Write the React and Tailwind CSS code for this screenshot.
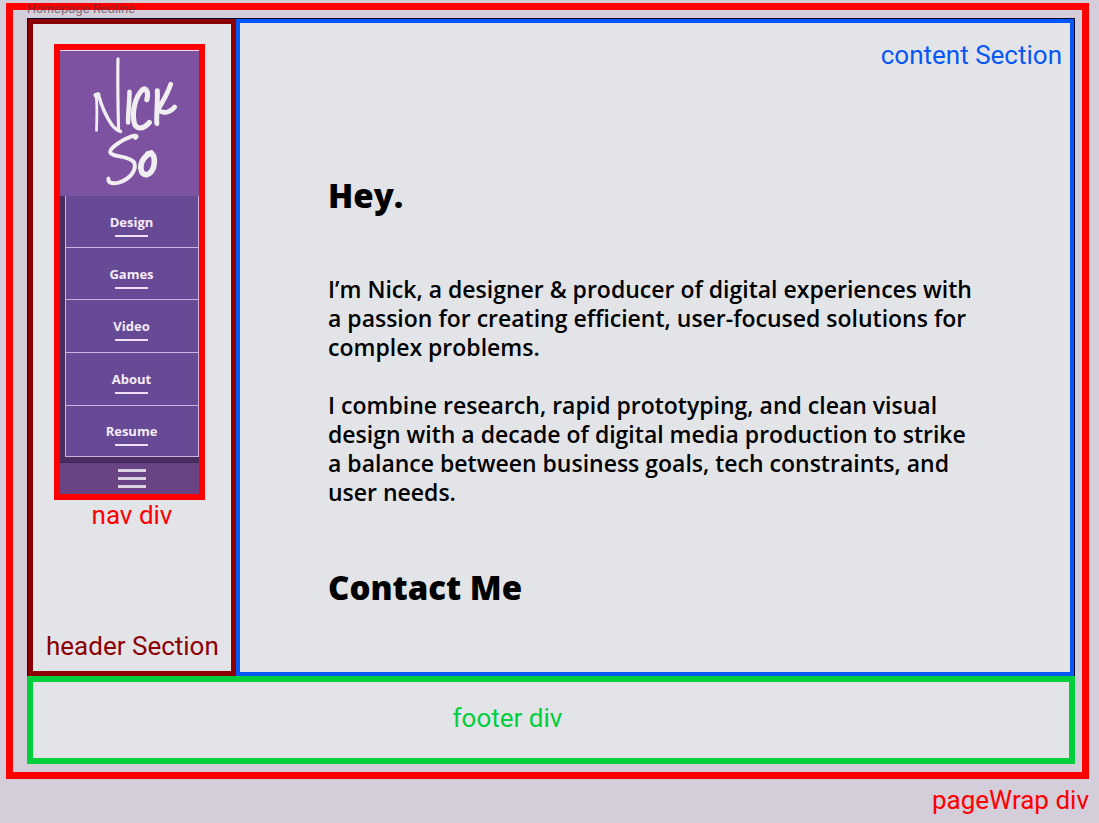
const links = [
  { label: "Design", row: "h-[52px]" },
  { label: "Games", row: "h-[52px]" },
  { label: "Video", row: "h-[53px]" },
  { label: "About", row: "h-[53px]" },
  { label: "Resume", row: "h-[51px]" },
];

function Logo() {
  return (
    <svg
      viewBox="0 0 138 146"
      className="block h-[146px] w-full border-t border-[#e6d5ee] bg-[#7c52a1]"
      fill="none"
      stroke="#f1eef1"
      strokeLinecap="round"
      strokeLinejoin="round"
      role="img"
      aria-label="Nick So"
    >
      <path strokeWidth="2.8" d="M35.4 45 C36.8 56 36 68 35.8 80" />
      <path strokeWidth="4.6" d="M35 44.6 L37.5 43.8" />
      <path strokeWidth="3.4" d="M38 45 C41 56 47 68 51 74 C54 78 57 80 60 81" />
      <path strokeWidth="3.2" d="M57.4 8 C57 30 57.5 60 58 80" />
      <path strokeWidth="4.6" d="M69 41 C69 52 67.5 62 67.6 72" />
      <path strokeWidth="5.2" d="M86.5 49 C88.5 41 85.5 36 82 39 C75 46 71.5 60 73.5 71 C75 80 83 79 89 72" />
      <path strokeWidth="5" d="M97 40 C97.5 51 96 62 96.5 73" />
      <path strokeWidth="4.8" d="M110.5 33.5 C107 44 102 52 97.5 59 C103 64 110 62 114.5 56.5" />
      <path strokeWidth="4" d="M75 87.5 C78 85.5 75 84.5 71 86 C60 90 49 98 49.5 102 C51 107 68 105 73.5 112 C77 119 70 129 58 132.5 C51 134 47 132.5 47.8 128.5" />
      <path strokeWidth="5.6" d="M91 102.5 C82 106 78 116 82 123 C88 128 94 120 94 111 C94 105 92 102 87.5 103.5" />
    </svg>
  );
}

export default function App() {
  return (
    <div className="min-h-screen bg-[#d4cedb] pt-[3px] pr-[10px] pl-[6px] font-['Roboto',sans-serif] text-[26px] leading-8">
      <div className="relative border-7 border-[#fe0000] pt-2 pr-[7px] pb-2 pl-[14px]">
        <span className="absolute top-[-9px] left-[14px] font-['Inter',sans-serif] text-xs leading-4 font-medium text-[#55303a]/60">
          Homepage Redline
        </span>
        <div className="flex border-t border-r border-l border-[#0a0a30] bg-[#e3e4e8]">
          <header className="flex w-[208px] shrink-0 flex-col justify-between border-[5px] border-[#8b0000] px-[13px] pt-5 pb-[9px]">
            <div className="mr-[6px] flex flex-col items-center">
              <nav className="w-[151px] border-6 border-[#fe0000] bg-[#482d5f]">
                <Logo />
                <ul className="mb-[5px] ml-[5px] border-r border-l border-[#cdb2e0] bg-[#664a95]">
                  {links.map(({ label, row }) => (
                    <li key={label} className={`border-b border-[#cdb2e0] ${row}`}>
                      <a
                        href={`#${label.toLowerCase()}`}
                        className="flex h-full flex-col items-center justify-center gap-1 pt-1.5 font-['Open_Sans',sans-serif] text-[13px] leading-[18px] font-bold text-[#f6ebfb]"
                      >
                        {label}
                        <span className="h-[2px] w-[33px] bg-[#eee0f6]" />
                      </a>
                    </li>
                  ))}
                </ul>
                <button
                  type="button"
                  aria-label="Menu"
                  className="flex h-8 w-full flex-col items-center justify-center gap-[5px] border-t border-[#3e2355] bg-[#694485] pl-1.5"
                >
                  <span className="h-[3px] w-7 bg-[#ddd2e2]" />
                  <span className="h-[3px] w-7 bg-[#ddd2e2]" />
                  <span className="h-[3px] w-7 bg-[#ddd2e2]" />
                </button>
              </nav>
              <p className="pl-1.5 leading-[30px] text-[#fe0000]">nav div</p>
            </div>
            <p className="text-center whitespace-nowrap text-[#8b0000]">header Section</p>
          </header>
          <section className="min-w-0 flex-1 border-4 border-[#0757f5] pt-4 pb-[60px] text-black">
            <p className="pr-2 text-right text-[#0757f5]">content Section</p>
            <div className="pl-[88px] font-['Open_Sans',sans-serif]">
              <h1 className="mt-[101px] text-[33px] leading-[48px] font-extrabold">Hey.</h1>
              <div className="mt-[55px] flex flex-col gap-[29px] text-[23px] leading-[29px] font-semibold">
                <p>
                  I’m Nick, a designer &amp; producer of digital experiences with
                  <br />a passion for creating efficient, user-focused solutions for
                  <br />
                  complex problems.
                </p>
                <p>
                  I combine research, rapid prototyping, and clean visual
                  <br />
                  design with a decade of digital media production to strike
                  <br />a balance between business goals, tech constraints, and
                  <br />
                  user needs.
                </p>
              </div>
              <h2 className="mt-[57px] text-[33px] leading-[48px] font-extrabold">Contact Me</h2>
            </div>
          </section>
        </div>
        <footer className="flex h-[88px] items-center border-[6px] border-[#00cf3d] bg-[#e3e4e8] pb-1">
          <p className="ml-[40.5%] text-[#00cf3d]">footer div</p>
        </footer>
      </div>
      <p className="pt-[5px] text-right text-[#fe0000]">pageWrap div</p>
    </div>
  );
}
